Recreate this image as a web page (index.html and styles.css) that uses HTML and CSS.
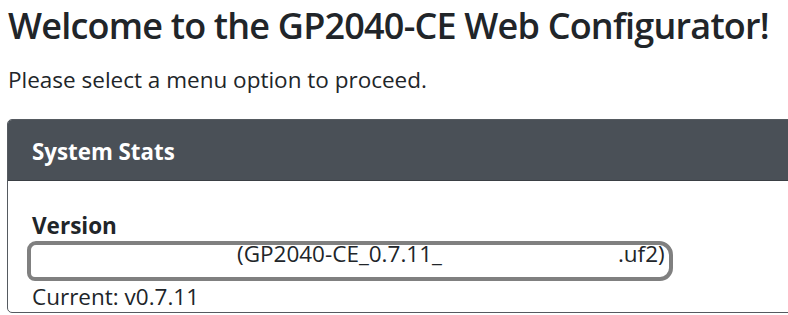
FILE: index.html
```html
<!DOCTYPE html>
<html>
<head>
<meta charset="utf-8">
<link rel="stylesheet" href="styles.css">
</head>
<body>
<div class="page">
  <h1 class="title">Welcome to the GP2040-CE Web Configurator!</h1>
  <p class="lead">Please select a menu option to proceed.</p>
  <div class="card">
    <div class="card-header">System Stats</div>
    <div class="card-body">
      <div class="label">Version</div>
      <div class="version-row">
        <span class="redact"><span class="blank1"></span><span class="txt">(GP2040-CE_0.7.11_</span><span class="blank2"></span><span class="txt">.uf2)</span></span>
      </div>
      <div class="current">Current: v0.7.11</div>
    </div>
  </div>
</div>
</body>
</html>
```
FILE: styles.css
```css
html, body {
  margin: 0;
  padding: 0;
  overflow: hidden;
  background: #ffffff;
}
body {
  font-family: "Open Sans", "Noto Sans", sans-serif;
  color: #212529;
}
.page {
  padding: 0 0 0 8px;
}
.title {
  margin: 0;
  padding-top: 2px;
  font-size: 36px;
  line-height: 48px;
  font-weight: 600;
  letter-spacing: -0.8px;
  white-space: nowrap;
}
.lead {
  margin: 15px 0 0 0;
  font-size: 22.5px;
  line-height: 30px;
  white-space: nowrap;
}
.card {
  margin: 24px 0 0 -1px;
  width: 820px;
  border: 1px solid #555a60;
  border-radius: 5px;
  overflow: hidden;
}
.card-header {
  background: #4a5057;
  color: #ffffff;
  font-weight: 700;
  font-size: 22.3px;
  height: 57px;
  line-height: 57px;
  padding: 3px 24px 0 24px;
  border-bottom: 1px solid #3a3f44;
}
.card-body {
  padding: 30px 24px 0 24px;
  font-size: 22.5px;
}
.label {
  font-weight: 700;
  line-height: 30px;
}
.version-row {
  margin: 0 0 0 -5px;
  height: 40px;
}
.redact {
  display: flex;
  align-items: flex-start;
  box-sizing: border-box;
  width: 646px;
  height: 40px;
  border: 4px solid #808080;
  border-radius: 9px 14px 13px 8px;
  background: #ffffff;
}
.txt {
  line-height: 18px;
  white-space: nowrap;
}
.blank1 {
  flex: none;
  width: 206px;
}
.blank2 {
  flex: none;
  width: 176px;
}
.current {
  margin-top: 1px;
  line-height: 30px;
}
```
